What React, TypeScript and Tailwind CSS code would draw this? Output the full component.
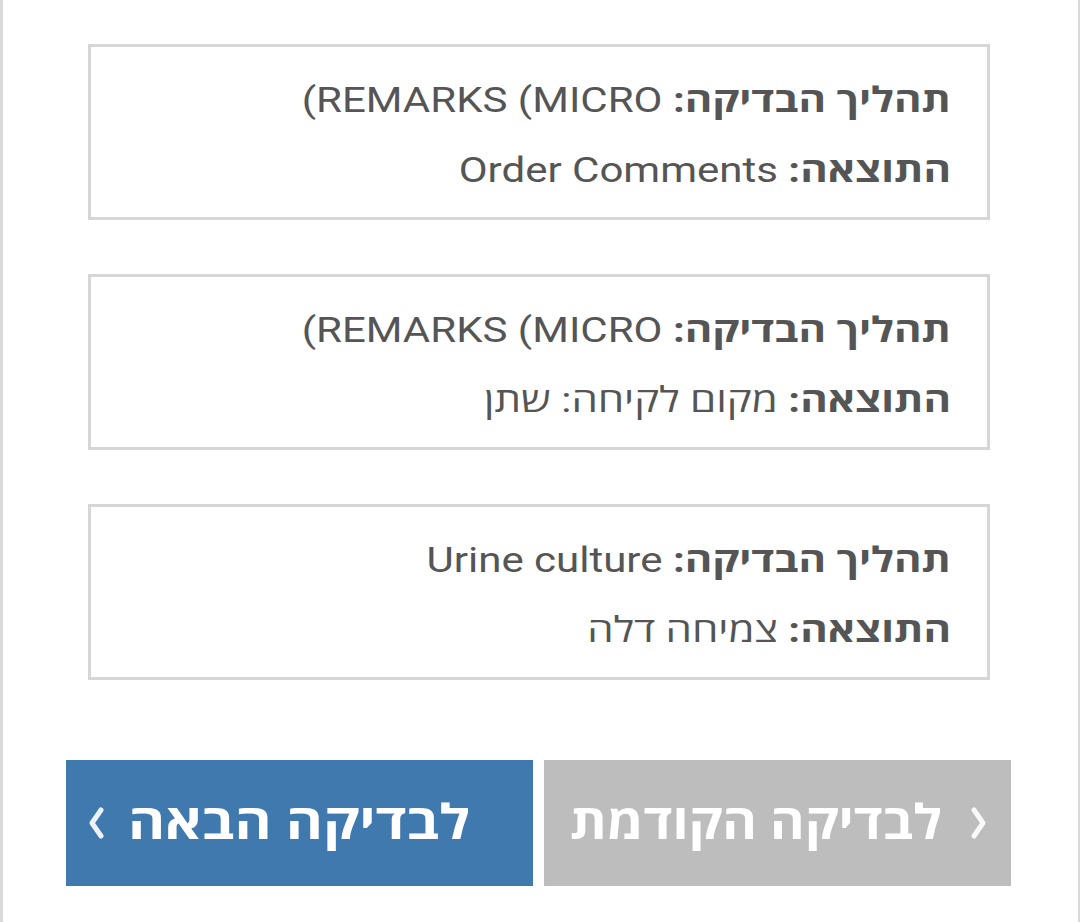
import React from "react";

interface TestRow {
  process: string;
  closing?: string;
  result: string;
}

// הסוגר הסוגר נשאר מחוץ לבידוד כדי שיוצג כמו במכשיר
const rows: TestRow[] = [
  { process: "REMARKS (MICRO", closing: ")", result: "Order Comments" },
  { process: "REMARKS (MICRO", closing: ")", result: "מקום לקיחה: שתן" },
  { process: "Urine culture", result: "צמיחה דלה" },
];

function Chevron({ dir }: { dir: "left" | "right" }) {
  return (
    <svg width="18" height="36" viewBox="0 0 18 36" className="block">
      <path
        d={dir === "left" ? "M14 5 L5 18 L14 31" : "M4 5 L13 18 L4 31"}
        fill="none"
        stroke="white"
        strokeWidth="5"
        strokeLinecap="round"
        strokeLinejoin="round"
        opacity="0.9"
      />
    </svg>
  );
}

export default function App() {
  return (
    <div
      dir="rtl"
      className="w-[1080px] h-[922px] bg-white border-l-[3px] border-r-2 border-[#d9d9d9] text-[#555555] overflow-hidden"
      style={{ fontFamily: "Roboto, 'Open Sans', 'DejaVu Sans', sans-serif" }}
    >
      <div className="pt-[44px] pr-[88px] pl-[85px] flex flex-col gap-[54px]">
        {rows.map((r, i) => (
          <div
            key={i}
            className="border-[3px] border-[#d6d6d6] pt-[19px] pb-[11px] pr-[36px] pl-[20px] text-[35px] leading-[70px]"
          >
            <div className="origin-right scale-x-[1.2] whitespace-nowrap">
              <span className="font-bold">תהליך הבדיקה: </span>
              <bdi dir="ltr">{r.process}</bdi>
              {r.closing}
            </div>
            <div className="origin-right scale-x-[1.2] whitespace-nowrap">
              <span className="font-bold">התוצאה: </span>
              <span>{r.result}</span>
            </div>
          </div>
        ))}
      </div>

      {/* כפתורי ניווט */}
      <div className="mt-[80px] pr-[67px] pl-[63px] flex gap-[11px]">
        <button className="w-[467px] h-[126px] bg-[#bdbdbd] text-white font-bold text-[48px] flex items-center justify-start gap-[45px] pr-[23px]">
          <span className="w-[18px] shrink-0">
            <Chevron dir="right" />
          </span>
          <span className="inline-block scale-x-[1.1] whitespace-nowrap">לבדיקה הקודמת</span>
        </button>
        <button className="relative w-[467px] h-[126px] bg-[#4079ad] text-white font-bold text-[48px] flex items-center justify-center">
          <span className="inline-block scale-x-[1.18] whitespace-nowrap">לבדיקה הבאה</span>
          <span className="absolute left-[21px] top-[45px]">
            <Chevron dir="left" />
          </span>
        </button>
      </div>
    </div>
  );
}
